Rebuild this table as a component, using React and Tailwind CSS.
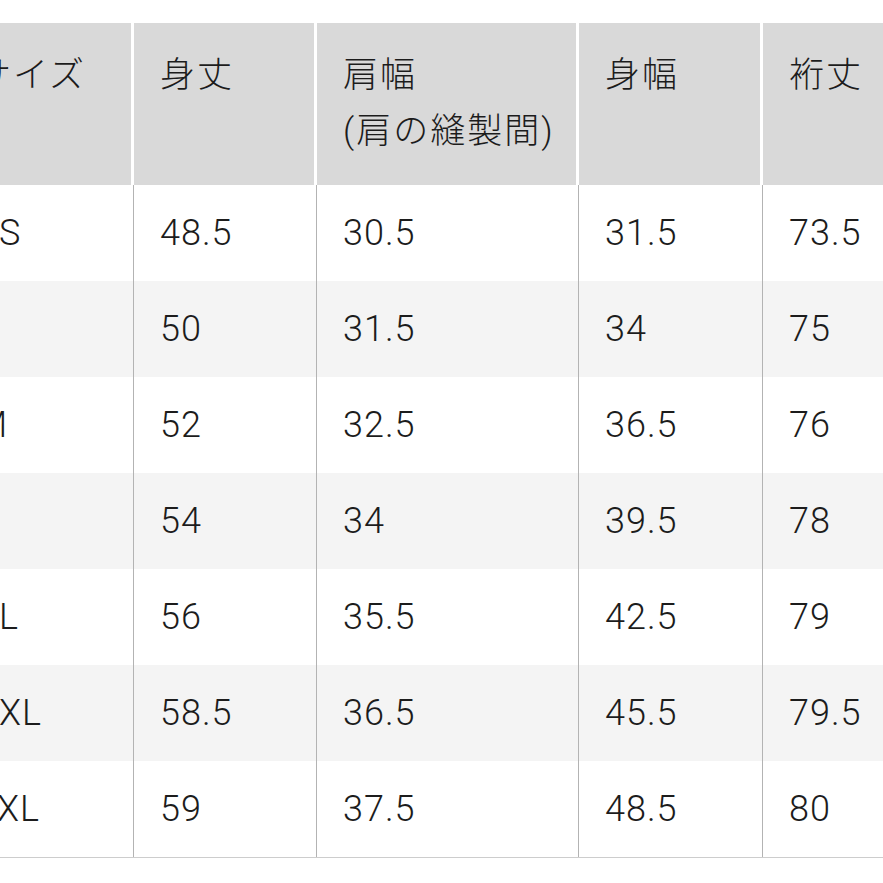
import React from 'react'

const cols = ['w-[184px]', 'w-[183px]', 'w-[262px]', 'w-[184px]', 'w-[187px]']

const rows = [
  ['XS', '48.5', '30.5', '31.5', '73.5'],
  ['S', '50', '31.5', '34', '75'],
  ['M', '52', '32.5', '36.5', '76'],
  ['L', '54', '34', '39.5', '78'],
  ['XL', '56', '35.5', '42.5', '79'],
  ['XXL', '58.5', '36.5', '45.5', '79.5'],
  ['3XL', '59', '37.5', '48.5', '80'],
]

const SizeTable = () => {
  return (
    <div className="w-[883px] h-[883px] overflow-hidden bg-white text-[#1c1c1c]"
      style={{ fontFamily: 'Roboto, "Noto Sans CJK JP", sans-serif' }}>
      <div className="mt-[23px] ml-[-50px] w-max">
        {/* header */}
        <div className="flex h-[162px] bg-[#d9d9d9] text-[35px] leading-[56px] tracking-[2px] font-light">
          <div className={`${cols[0]} shrink-0 pl-[26px] pt-[25px] border-r-[3px] border-white`}>サイズ</div>
          <div className={`${cols[1]} shrink-0 pl-[26px] pt-[25px] border-r-[3px] border-white`}>身丈</div>
          <div className={`${cols[2]} shrink-0 pl-[26px] pt-[25px] border-r-[3px] border-white`}>
            肩幅<br />(肩の縫製間)
          </div>
          <div className={`${cols[3]} shrink-0 pl-[26px] pt-[25px] border-r-[3px] border-white`}>身幅</div>
          <div className={`${cols[4]} shrink-0 pl-[26px] pt-[25px]`}>裄丈</div>
        </div>

        {/* body */}
        <div className="border-b border-[#cdcdcd]">
          {rows.map((r, i) => (
            <div key={r[0]} className={`flex h-[96px] text-[36px] tracking-[1px] font-light ${i % 2 === 1 ? 'bg-[#f4f4f4]' : 'bg-white'}`}>
              {r.map((c, j) => (
                <div key={j}
                  className={`${cols[j]} shrink-0 flex items-center pl-[26px] ${j < 4 ? 'border-r border-[#b3b3b3]' : ''}`}>
                  {c}
                </div>
              ))}
            </div>
          ))}
        </div>
      </div>
    </div>
  )
}

export default SizeTable
